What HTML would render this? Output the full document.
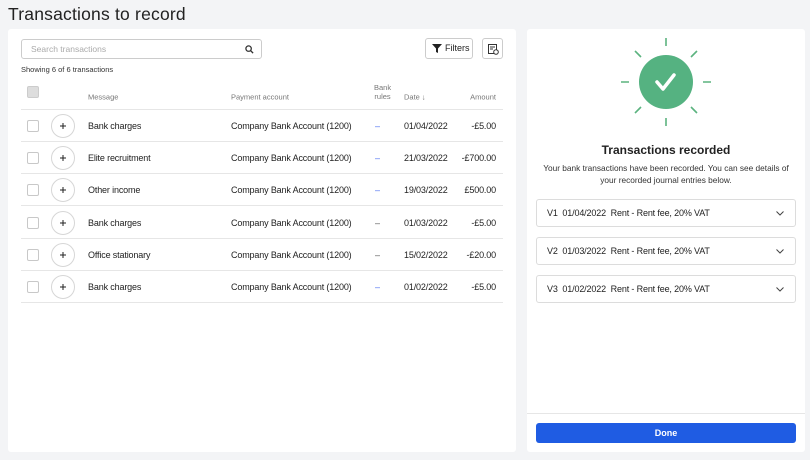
<!DOCTYPE html>
<html><head><style>
*{box-sizing:border-box;margin:0;padding:0}
body{width:810px;height:460px;background:#f3f4f6;font-family:"Liberation Sans",sans-serif;color:#222;position:relative;overflow:hidden}
.abs{position:absolute}
h1{position:absolute;left:8px;top:4px;font-size:17.5px;font-weight:normal;color:#222;letter-spacing:0.2px}
.panel{position:absolute;background:#fff;border-radius:3px}
.row{position:absolute;left:21px;width:482px;height:32px;border-bottom:1px solid #e6e6e6;font-size:9px;letter-spacing:-0.15px}
.row span{position:absolute;top:50%;transform:translateY(-50%)}
.cb{left:6px;width:12px;height:12px;border:1px solid #c8c8c8;border-radius:2px}
.row .plus{left:30px;width:24px;height:24px;border:1px solid #d6d6d6;border-radius:50%}
.plus svg{position:absolute;left:8px;top:8px}
.acc{position:absolute;left:536px;width:260px;height:28px;border:1px solid #dcdcdc;border-radius:3px;font-size:9px;letter-spacing:-0.15px;padding-left:10px;line-height:27px}
.acc svg{position:absolute;right:11px;top:11px}
</style></head><body>
<h1>Transactions to record</h1>
<div class="panel" style="left:8px;top:29px;width:508px;height:423px"></div>
<div class="panel" style="left:527px;top:29px;width:278px;height:423px"></div>
<div class="abs" style="left:21px;top:39px;width:241px;height:20px;border:1px solid #ccc;border-radius:3px;font-size:8.5px;color:#aaa;padding-left:9px;line-height:18px">Search transactions
<svg class="abs" style="right:7px;top:5px" width="9" height="9" viewBox="0 0 10 10"><circle cx="4" cy="4" r="3" fill="none" stroke="#333" stroke-width="1.4"/><path d="M6.3 6.3L9 9" stroke="#333" stroke-width="1.5"/></svg></div>
<div class="abs" style="left:425px;top:38px;width:48px;height:21px;border:1px solid #ccc;border-radius:3px;font-size:9px;line-height:19px;padding-left:19px;color:#222">Filters
<svg class="abs" style="left:6px;top:5px" width="10" height="9" viewBox="0 0 10 9"><path d="M0 0H10L6 4.5V9L4 8V4.5Z" fill="#222"/></svg></div>
<div class="abs" style="left:482px;top:38px;width:21px;height:21px;border:1px solid #ccc;border-radius:3px">
<svg class="abs" style="left:5px;top:5px" width="11" height="11" viewBox="0 0 11 11"><rect x="0.5" y="0.5" width="8" height="9" fill="none" stroke="#333"/><path d="M2 3h5M2 5h3" stroke="#333"/><circle cx="8" cy="8" r="2.3" fill="#fff" stroke="#333"/></svg></div>
<div class="abs" style="left:21px;top:65px;font-size:7.5px;color:#333">Showing 6 of 6 transactions</div>
<div class="row" style="top:84px;height:26px;color:#777;font-size:7.5px;letter-spacing:0">
<span class="cb" style="background:#ddd;border-color:#ccc;top:30%"></span>
<span style="left:67px">Message</span><span style="left:210px">Payment account</span>
<span style="left:353px;line-height:9px;text-align:center;top:30%">Bank<br>rules</span>
<span style="left:383px">Date ↓</span><span style="right:7px">Amount</span></div>
<div class="row" style="top:110px"><span class="cb"></span><span class="plus"><svg width="6" height="6" viewBox="0 0 6 6"><path d="M3 0V6M0 3H6" stroke="#222"/></svg></span><span style="left:67px">Bank charges</span><span style="left:210px">Company Bank Account (1200)</span><span style="left:354px;color:#4a6cf0">–</span><span style="left:383px">01/04/2022</span><span style="right:7px">-£5.00</span></div>
<div class="row" style="top:142px"><span class="cb"></span><span class="plus"><svg width="6" height="6" viewBox="0 0 6 6"><path d="M3 0V6M0 3H6" stroke="#222"/></svg></span><span style="left:67px">Elite recruitment</span><span style="left:210px">Company Bank Account (1200)</span><span style="left:354px;color:#4a6cf0">–</span><span style="left:383px">21/03/2022</span><span style="right:7px">-£700.00</span></div>
<div class="row" style="top:174px"><span class="cb"></span><span class="plus"><svg width="6" height="6" viewBox="0 0 6 6"><path d="M3 0V6M0 3H6" stroke="#222"/></svg></span><span style="left:67px">Other income</span><span style="left:210px">Company Bank Account (1200)</span><span style="left:354px;color:#4a6cf0">–</span><span style="left:383px">19/03/2022</span><span style="right:7px">£500.00</span></div>
<div class="row" style="top:207px"><span class="cb"></span><span class="plus"><svg width="6" height="6" viewBox="0 0 6 6"><path d="M3 0V6M0 3H6" stroke="#222"/></svg></span><span style="left:67px">Bank charges</span><span style="left:210px">Company Bank Account (1200)</span><span style="left:354px;color:#555">–</span><span style="left:383px">01/03/2022</span><span style="right:7px">-£5.00</span></div>
<div class="row" style="top:239px"><span class="cb"></span><span class="plus"><svg width="6" height="6" viewBox="0 0 6 6"><path d="M3 0V6M0 3H6" stroke="#222"/></svg></span><span style="left:67px">Office stationary</span><span style="left:210px">Company Bank Account (1200)</span><span style="left:354px;color:#555">–</span><span style="left:383px">15/02/2022</span><span style="right:7px">-£20.00</span></div>
<div class="row" style="top:271px"><span class="cb"></span><span class="plus"><svg width="6" height="6" viewBox="0 0 6 6"><path d="M3 0V6M0 3H6" stroke="#222"/></svg></span><span style="left:67px">Bank charges</span><span style="left:210px">Company Bank Account (1200)</span><span style="left:354px;color:#4a6cf0">–</span><span style="left:383px">01/02/2022</span><span style="right:7px">-£5.00</span></div>
<svg class="abs" style="left:616px;top:34px" width="100" height="96" viewBox="0 0 100 96">
<g stroke="#5bb37f" stroke-width="1.6">
<path d="M50 4V12M50 84V92M5 48H13M87 48H95M19 17L25 23M81 17L75 23M19 79L25 73M81 79L75 73"/></g>
<circle cx="50" cy="48" r="27" fill="#55b281"/>
<path d="M41 48L47 55L58 41" fill="none" stroke="#fff" stroke-width="3.5" stroke-linecap="round" stroke-linejoin="round"/></svg>
<div class="abs" style="left:527px;top:143px;width:278px;text-align:center;font-size:12px;font-weight:bold;color:#222">Transactions recorded</div>
<div class="abs" style="left:527px;top:163px;width:278px;text-align:center;font-size:8.3px;line-height:11.5px;color:#333">Your bank transactions have been recorded. You can see details of<br>your recorded journal entries below.</div>
<div class="acc" style="top:199px">V1&nbsp;&nbsp;01/04/2022&nbsp;&nbsp;Rent - Rent fee, 20% VAT<svg width="8" height="5" viewBox="0 0 8 5"><path d="M0.5 0.5L4 4L7.5 0.5" fill="none" stroke="#444"/></svg></div>
<div class="acc" style="top:237px">V2&nbsp;&nbsp;01/03/2022&nbsp;&nbsp;Rent - Rent fee, 20% VAT<svg width="8" height="5" viewBox="0 0 8 5"><path d="M0.5 0.5L4 4L7.5 0.5" fill="none" stroke="#444"/></svg></div>
<div class="acc" style="top:275px">V3&nbsp;&nbsp;01/02/2022&nbsp;&nbsp;Rent - Rent fee, 20% VAT<svg width="8" height="5" viewBox="0 0 8 5"><path d="M0.5 0.5L4 4L7.5 0.5" fill="none" stroke="#444"/></svg></div>
<div class="abs" style="left:527px;top:413px;width:278px;border-top:1px solid #e6e6e6"></div>
<div class="abs" style="left:536px;top:423px;width:260px;height:20px;background:#1f5ce3;border-radius:3px;color:#fff;font-size:9px;font-weight:bold;text-align:center;line-height:20px">Done</div>
</body></html>
